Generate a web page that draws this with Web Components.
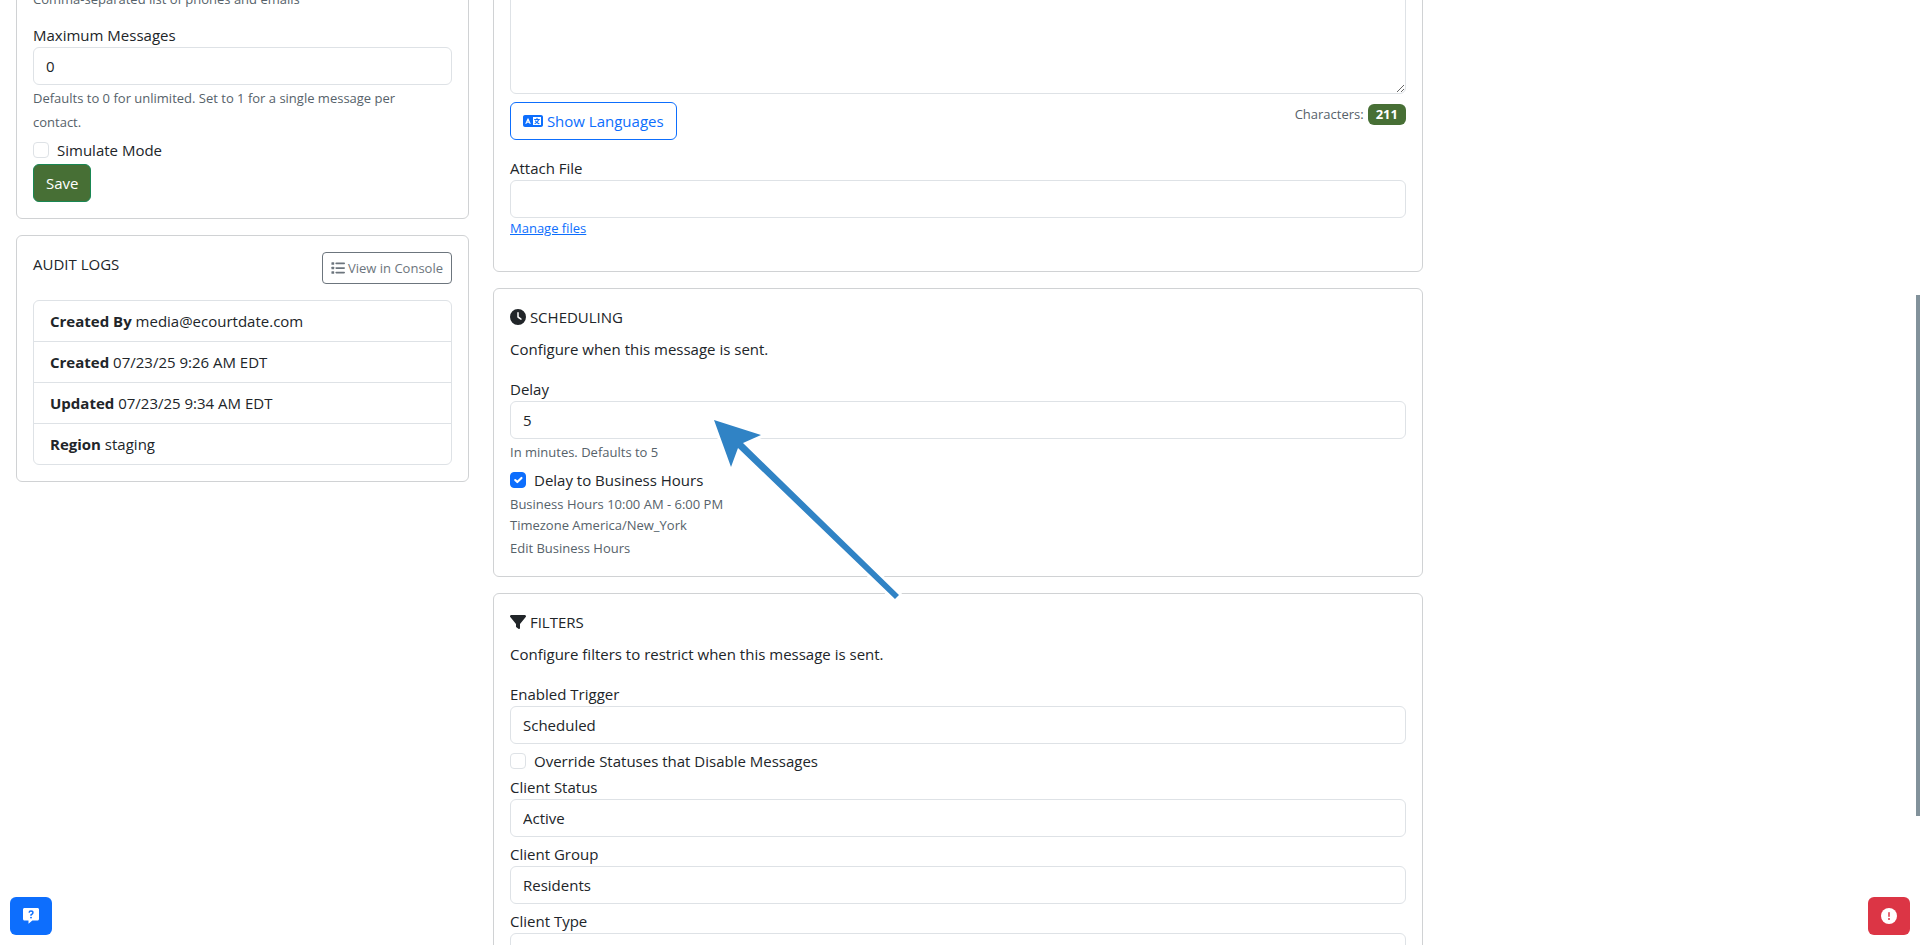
<!DOCTYPE html>
<html lang="en">
<head>
<meta charset="utf-8">
<title>Edit Message</title>
<style>
  html { scrollbar-width: none; }
  body {
    margin: 0;
    background: #fff;
    color: #212529;
    font: 15px/24px "Segoe UI", "Open Sans", "Noto Sans", sans-serif;
  }
</style>
</head>
<body>
<message-page></message-page>

<script>
const base = `
  *, *::before, *::after { box-sizing: border-box; }
  :host { display: block; }
  :host([hidden]) { display: none; }
  button, input, textarea { font: inherit; color: inherit; margin: 0; }
  svg { display: inline-block; fill: currentColor; }
`;

function define(name, css, html, setup) {
  const template = document.createElement('template');
  template.innerHTML = `<style>${base}${css}</style>`;
  customElements.define(name, class extends HTMLElement {
    connectedCallback() {
      if (this.shadowRoot) return;
      const root = this.attachShadow({ mode: 'open' });
      root.append(template.content.cloneNode(true));
      const body = document.createElement('template');
      body.innerHTML = typeof html === 'function' ? html(this) : html;
      root.append(body.content);
      if (setup) setup(this, root);
    }
  });
}

const icons = {
  clock: ['0 0 512 512', '<path fill-rule="evenodd" d="M256 0a256 256 0 1 1 0 512A256 256 0 1 1 256 0zM232 120V256c0 8 4 15.500 10.700 20l96 64c11 7.400 25.900 4.400 33.300-6.700s4.400-25.900-6.700-33.300L280 243.200V120c0-13.300-10.700-24-24-24s-24 10.700-24 24z"/>'],
  filter: ['0 0 512 512', '<path d="M3.900 54.900C10.500 40.900 24.500 32 40 32H472c15.500 0 29.500 8.900 36.100 22.900s4.600 30.500-5.200 42.500L320 320.900V448c0 12.100-6.800 23.200-17.700 28.600s-23.800 4.300-33.500-3l-64-48c-8.100-6-12.800-15.500-12.800-25.600V320.900L9 97.300C-.7 85.400-2.800 68.800 3.900 54.900z"/>'],
  list: ['0 0 512 512', '<rect x="16" y="44" width="100" height="92" rx="20"/><rect x="16" y="210" width="100" height="92" rx="20"/><rect x="16" y="376" width="100" height="92" rx="20"/><rect x="160" y="58" width="352" height="64" rx="30"/><rect x="160" y="224" width="352" height="64" rx="30"/><rect x="160" y="390" width="352" height="64" rx="30"/>'],
  language: ['0 0 640 512', '<path fill-rule="evenodd" d="M64 64C29 64 0 93 0 128V384c0 35 29 64 64 64H576c35 0 64-29 64-64V128c0-35-29-64-64-64zM320 128H576V384H320z"/><g fill="none" stroke="#fff" stroke-width="38" stroke-linecap="round" stroke-linejoin="round"><path d="M96 332L160 188L224 332M120 292H200"/></g><g fill="none" stroke="currentColor" stroke-width="38" stroke-linecap="round" stroke-linejoin="round"><path d="M372 208H524M448 172V208M500 212C486 270 440 318 388 338M400 258C422 300 462 328 508 338"/></g>'],
  question: ['0 0 512 512', '<path d="M48 0H464C492 0 512 20 512 48V352C512 380 492 400 464 400H300L176 500V400H48C20 400 0 380 0 352V48C0 20 20 0 48 0z"/><path d="M194 145C198 116 216 98 254 98C292 98 318 118 318 151C318 188 284 196 256 218V246" fill="none" stroke="#0d6efd" stroke-width="46"/><circle cx="256" cy="306" r="30" fill="#0d6efd"/>'],
  alert: ['0 0 512 512', '<circle cx="256" cy="256" r="256"/><rect x="232" y="128" width="48" height="160" rx="24" fill="#dc3545"/><circle cx="256" cy="352" r="32" fill="#dc3545"/>']
};

define('ui-icon', `
  :host { display: inline-block; line-height: 0; vertical-align: -2px; }
  svg { height: var(--icon-size, 16px); width: auto; }
`, el => {
  const [box, shapes] = icons[el.getAttribute('name')];
  return `<svg viewBox="${box}" aria-hidden="true">${shapes}</svg>`;
});

define('ui-card', `
  :host { position: relative; border: 1px solid #d0d2d4; border-radius: 6px; padding: 16px; background: #fff; }
`, '<slot></slot>');

define('card-title', `
  h2 { margin: 0 0 8px; font: inherit; text-transform: uppercase; }
  p { margin: 0 0 16px; }
`, el => `<h2><ui-icon name="${el.getAttribute('icon')}"></ui-icon> ${el.getAttribute('heading')}</h2><p><slot></slot></p>`);

define('text-field', `
  label { display: block; }
  input {
    display: block; width: 100%; height: 38px; padding: 6px 12px;
    border: 1px solid #dee2e6; border-radius: 6px; background: #fff; outline: none;
  }
  input:focus { border-color: #86b7fe; }
`, el => `<label for="field">${el.getAttribute('label')}</label><input id="field" type="text" value="${el.getAttribute('value') || ''}">`);

define('check-field', `
  :host { margin-bottom: 2px; }
  label { display: flex; align-items: center; gap: 8px; }
  input {
    appearance: none; flex: none; width: 16px; height: 16px;
    border: 1px solid #dee2e6; border-radius: 4px; background: #fff;
  }
  input:checked {
    border-color: #0d6efd;
    background: #0d6efd url("data:image/svg+xml,%3Csvg xmlns='http://www.w3.org/2000/svg' viewBox='0 0 20 20'%3E%3Cpath fill='none' stroke='%23fff' stroke-linecap='round' stroke-linejoin='round' stroke-width='3' d='m6 10 3 3 6-6'/%3E%3C/svg%3E") center / contain;
  }
`, el => `<label><input type="checkbox" ${el.hasAttribute('checked') ? 'checked' : ''}><slot></slot></label>`);

define('help-text', `
  :host { margin: 1px 0 4px; padding-right: 16px; font-size: 13px; color: #56626a; }
  :host(.spaced) { margin-bottom: 12px; }
`, '<slot></slot>');

define('ui-button', `
  :host { display: inline-block; vertical-align: top; }
  button {
    display: block; height: 38px; padding: 0 12px; cursor: pointer; white-space: nowrap;
    border: 1px solid; border-radius: 6px; background: #fff;
  }
  .save { background: #476f35; border-color: #198754; color: #fff; }
  .primary { color: #0d6efd; }
  .console { height: 32px; padding: 0 8px; font-size: 13px; color: #6c757d; border-radius: 4px; }
`, el => `<button type="button" class="${el.getAttribute('kind')}"><slot></slot></button>`);

define('float-button', `
  :host { position: fixed; bottom: 10px; z-index: 5; }
  :host([side="left"]) { left: 10px; }
  :host([side="right"]) { right: 10px; }
  button {
    display: grid; place-items: center; width: 42px; height: 38px; padding: 0;
    border: 0; border-radius: 6px; color: #fff; background: #0d6efd; cursor: pointer;
  }
  :host([side="right"]) button { background: #dc3545; }
`, el => `<button type="button" aria-label="${el.getAttribute('label')}"><ui-icon name="${el.getAttribute('icon')}"></ui-icon></button>`);

define('message-settings', '', `
  <ui-card>
    <help-text class="spaced">Comma-separated list of phones and emails</help-text>
    <text-field label="Maximum Messages" value="0"></text-field>
    <help-text>Defaults to 0 for unlimited. Set to 1 for a single message per contact.</help-text>
    <check-field>Simulate Mode</check-field>
    <ui-button kind="save">Save</ui-button>
  </ui-card>
`);

define('audit-logs', `
  header { display: flex; justify-content: space-between; align-items: flex-start; margin-bottom: 16px; }
  h2 { margin: 0; font: inherit; text-transform: uppercase; }
  ui-icon { --icon-size: 14px; }
  ul { margin: 0; padding: 0; list-style: none; border: 1px solid #dee2e6; border-radius: 6px; }
  li { padding: 8px 16px; }
  li + li { border-top: 1px solid #dee2e6; }
`, `
  <ui-card>
    <header>
      <h2>Audit Logs</h2>
      <ui-button kind="console"><ui-icon name="list"></ui-icon> View in Console</ui-button>
    </header>
    <ul>
      <li><b>Created By</b> media@ecourtdate.com</li>
      <li><b>Created</b> 07/23/25 9:26 AM EDT</li>
      <li><b>Updated</b> 07/23/25 9:34 AM EDT</li>
      <li><b>Region</b> staging</li>
    </ul>
  </ui-card>
`);

define('message-content', `
  textarea {
    display: block; width: 100%; height: 108px; padding: 6px 12px; resize: vertical;
    border: 1px solid #dee2e6; border-radius: 6px; background: #fff; outline: none;
  }
  .tools { display: flex; justify-content: space-between; align-items: flex-start; margin: 8px 0 16px; }
  .count { display: flex; align-items: center; gap: 4px; font-size: 13px; color: #56626a; }
  .count b { padding: 0 8px; border-radius: 6px; background: #476f35; color: #fff; line-height: 21px; }
  a { display: block; width: fit-content; margin-bottom: 16px; font-size: 13px; line-height: 21px; color: #0d6efd; }
`, `
  <ui-card>
    <textarea aria-label="Message content"></textarea>
    <div class="tools">
      <ui-button kind="primary"><ui-icon name="language"></ui-icon> Show Languages</ui-button>
      <div class="count"><span>Characters:</span><b>211</b></div>
    </div>
    <text-field label="Attach File"></text-field>
    <a href="#files">Manage files</a>
  </ui-card>
`);

define('message-scheduling', `
  .hours { font-size: 13px; line-height: 21px; color: #56626a; }
  .hours div:last-child { line-height: 24px; }
  .hours a { color: inherit; text-decoration: none; }
  .pointer { position: absolute; left: 214px; top: 125px; z-index: 2; pointer-events: none; }
`, `
  <ui-card>
    <card-title icon="clock" heading="Scheduling">Configure when this message is sent.</card-title>
    <text-field label="Delay" value="5"></text-field>
    <help-text>In minutes. Defaults to 5</help-text>
    <check-field checked>Delay to Business Hours</check-field>
    <div class="hours">
      <div>Business Hours 10:00 AM - 6:00 PM</div>
      <div>Timezone America/New_York</div>
      <div><a href="#hours">Edit Business Hours</a></div>
    </div>
    <svg class="pointer" width="200" height="194" viewBox="0 0 200 194" aria-hidden="true">
      <path d="M6 6L53 21L35 29L191 181L187 185L30 34L23 53Z" fill="#3083c5" stroke="#fff" stroke-width="6" paint-order="stroke"/>
    </svg>
  </ui-card>
`);

define('message-filters', `
  text-field { margin-bottom: 5px; }
`, `
  <ui-card>
    <card-title icon="filter" heading="Filters">Configure filters to restrict when this message is sent.</card-title>
    <text-field label="Enabled Trigger" value="Scheduled"></text-field>
    <check-field>Override Statuses that Disable Messages</check-field>
    <text-field label="Client Status" value="Active"></text-field>
    <text-field label="Client Group" value="Residents"></text-field>
    <text-field label="Client Type"></text-field>
  </ui-card>
`);

define('message-page', `
  :host { overflow: hidden; }
  main { display: flex; margin: -31px 8px 0 4px; }
  .side, .main { display: flex; flex-direction: column; gap: 16px; padding: 0 12px; }
  .side { width: 25%; }
  .main { width: 50%; }
  message-scheduling { position: relative; z-index: 1; }
  .thumb { position: fixed; right: 0; top: 31.2vh; width: 4px; height: 55.1vh; background: #82929b; }
`, `
  <main>
    <div class="side">
      <message-settings></message-settings>
      <audit-logs></audit-logs>
    </div>
    <div class="main">
      <message-content></message-content>
      <message-scheduling></message-scheduling>
      <message-filters></message-filters>
    </div>
  </main>
  <float-button side="left" icon="question" label="Help"></float-button>
  <float-button side="right" icon="alert" label="Report an issue"></float-button>
  <div class="thumb"></div>
`);
</script>
</body>
</html>
